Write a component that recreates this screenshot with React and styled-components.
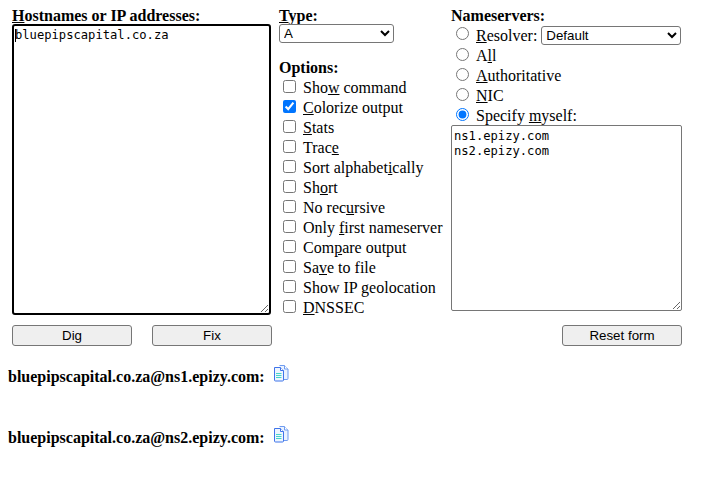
import React from 'react'
import styled, { createGlobalStyle } from 'styled-components'

const Global = createGlobalStyle`
  html, body { margin: 0; padding: 0; background: #fff; }
  body { font-family: "Liberation Serif", "Times New Roman", serif; font-size: 16px; color: #000; }
`

const Page = styled.div`
  width: 710px;
  height: 485px;
  overflow: hidden;
  padding: 7px 0 0 8px;
  box-sizing: border-box;
`

const Form = styled.form`
  display: grid;
  grid-template-columns: 260px 179px 231px;
  column-gap: 0;
  margin-left: 4px;
  width: 670px;
`

const LeftCol = styled.div`
  display: flex;
  flex-direction: column;
`

const MiddleCol = styled.div`
  display: flex;
  flex-direction: column;
  padding-left: 7px;
`

const RightCol = styled.div`
  display: flex;
  flex-direction: column;
`

const Heading = styled.div`
  font-weight: bold;
  line-height: 17px;
  height: 17px;
`

const HostWrap = styled.div`
  position: relative;
  width: 259px;
  height: 291px;
`

const Caret = styled.span`
  position: absolute;
  left: 3px;
  top: 5px;
  width: 1px;
  height: 13px;
  background: #000;
`

const HostBox = styled.textarea`
  display: block;
  box-sizing: border-box;
  width: 259px;
  height: 291px;
  margin: 0;
  padding: 2px 2px 2px 1px;
  border: 2px solid #000;
  border-radius: 3px;
  outline: none;
  font-family: "DejaVu Sans Mono", monospace;
  font-size: 12.15px;
  line-height: 15px;
  color: #000;
  background: #fff;
`

const TypeSelect = styled.select`
  display: block;
  box-sizing: border-box;
  width: 115px;
  height: 19px;
  margin: 0 0 16px;
  padding: 0;
  font-family: "Liberation Sans", Arial, sans-serif;
  font-size: 13.33px;
  background: #fff;
  border: 1px solid #767676;
  border-radius: 3px;
`

const OptionList = styled.div`
  display: flex;
  flex-direction: column;
  padding-top: 2px;
`

const Row = styled.label`
  display: flex;
  align-items: center;
  height: 20px;
  line-height: 20px;
  white-space: nowrap;
`

const Check = styled.input.attrs({ type: 'checkbox' })`
  width: 13px;
  height: 13px;
  margin: 0 7px 0 4px;
  flex: none;
  position: relative;
  top: -2px;
`

const RadioList = styled.div`
  display: flex;
  flex-direction: column;
  padding-top: 2px;
  margin-bottom: -1px;
`

const Radio = styled.input.attrs({ type: 'radio', name: 'ns' })`
  width: 13px;
  height: 13px;
  margin: 0 7px 0 5px;
  flex: none;
  position: relative;
  top: ${p => (p.$raised ? -3 : -2)}px;
`

const ResolverSelect = styled.select`
  box-sizing: border-box;
  width: 140px;
  height: 19px;
  margin: -2px 0 0 4px;
  padding: 0;
  font-family: "Liberation Sans", Arial, sans-serif;
  font-size: 13.33px;
  background: #fff;
  border: 1px solid #767676;
  border-radius: 3px;
`

const ServerBox = styled.textarea`
  display: block;
  box-sizing: border-box;
  width: 231px;
  height: 186px;
  margin: 0;
  padding: 3px 2px 2px 2px;
  border: 1px solid #767676;
  border-radius: 2px;
  outline: none;
  font-family: "DejaVu Sans Mono", monospace;
  font-size: 12.15px;
  line-height: 15px;
  color: #000;
  background: #fff;
`

const Buttons = styled.div`
  display: flex;
  justify-content: space-between;
  width: 260px;
  margin-top: 10px;
`

const PushButton = styled.button`
  box-sizing: border-box;
  width: 120px;
  height: 21px;
  margin: 0;
  padding: 0;
  background: #efefef;
  border: 1px solid #767676;
  border-radius: 3px;
  font-family: "Liberation Sans", Arial, sans-serif;
  font-size: 13.33px;
  color: #000;
`

const ResetRow = styled.div`
  display: flex;
  justify-content: flex-end;
  margin-top: 14px;
`

const Results = styled.div`
  display: flex;
  flex-direction: column;
  gap: 43px;
  margin-top: 22px;
`

const ResultLine = styled.div`
  display: flex;
  align-items: flex-start;
  height: 18px;
  font-weight: bold;
  line-height: 18px;
`

const CopyLink = styled.span`
  display: block;
  width: 16px;
  height: 17px;
  margin: -3px 0 0 8px;
`

const Key = styled.u`
  text-decoration: underline;
`

const CopyIcon = () => (
  <svg width="16" height="17" viewBox="0 0 16 17" fill="none">
    <path d="M6.5 .5h5l3.5 3.5v9.5q0 1-1 1h-3" fill="#eaf2ff" stroke="#6f9cf0" />
    <path d="M11.5 .5v3.5h3.5" stroke="#6f9cf0" fill="#fff" />
    <path d="M1.5 2.5h6l3 3v9.5q0 1-1 1h-7q-1 0-1-1z" fill="#eef5ff" stroke="#3f74ea" />
    <path d="M7.5 2.5v3h3" stroke="#3f74ea" fill="#fff" />
    <path d="M3 8.5h5.5M3 10.5h5.5M3 12.5h5.5" stroke="#45d6c8" />
  </svg>
)

const options = [
  [['Sho', 'w', ' command'], false],
  [['', 'C', 'olorize output'], true],
  [['', 'S', 'tats'], false],
  [['Trac', 'e', ''], false],
  [['Sort alphabet', 'i', 'cally'], false],
  [['Sh', 'o', 'rt'], false],
  [['No rec', 'u', 'rsive'], false],
  [['Only ', 'f', 'irst nameserver'], false],
  [['Com', 'p', 'are output'], false],
  [['Sa', 'v', 'e to file'], false],
  [['Show IP geolocation', '', ''], false],
  [['', 'D', 'NSSEC'], false],
]

const App = () => {
  return (
    <Page>
      <Global />
      <Form onSubmit={e => e.preventDefault()}>
        <LeftCol>
          <Heading><Key>H</Key>ostnames or IP addresses:</Heading>
          <HostWrap>
            <HostBox defaultValue="bluepipscapital.co.za" spellCheck={false} />
            <Caret />
          </HostWrap>
          <Buttons>
            <PushButton type="button">Dig</PushButton>
            <PushButton type="button">Fix</PushButton>
          </Buttons>
        </LeftCol>
        <MiddleCol>
          <Heading><Key>T</Key>ype:</Heading>
          <TypeSelect defaultValue="A"><option>A</option></TypeSelect>
          <Heading>Options:</Heading>
          <OptionList>
            {options.map(([[a, k, b], on]) => (
              <Row key={a + k + b}>
                <Check defaultChecked={on} />
                <span>{a}{k && <Key>{k}</Key>}{b}</span>
              </Row>
            ))}
          </OptionList>
        </MiddleCol>
        <RightCol>
          <Heading>Nameservers:</Heading>
          <RadioList>
            <Row>
              <Radio $raised />
              <span><Key>R</Key>esolver:</span>
              <ResolverSelect defaultValue="Default"><option>Default</option></ResolverSelect>
            </Row>
            <Row><Radio /><span>A<Key>l</Key>l</span></Row>
            <Row><Radio /><span><Key>A</Key>uthoritative</span></Row>
            <Row><Radio /><span><Key>N</Key>IC</span></Row>
            <Row><Radio defaultChecked /><span>Specify <Key>m</Key>yself:</span></Row>
          </RadioList>
          <ServerBox defaultValue={'ns1.epizy.com\nns2.epizy.com'} spellCheck={false} />
          <ResetRow>
            <PushButton type="button">Reset form</PushButton>
          </ResetRow>
        </RightCol>
      </Form>
      <Results>
        <ResultLine>bluepipscapital.co.za@ns1.epizy.com:<CopyLink><CopyIcon /></CopyLink></ResultLine>
        <ResultLine>bluepipscapital.co.za@ns2.epizy.com:<CopyLink><CopyIcon /></CopyLink></ResultLine>
      </Results>
    </Page>
  )
}

export default App
